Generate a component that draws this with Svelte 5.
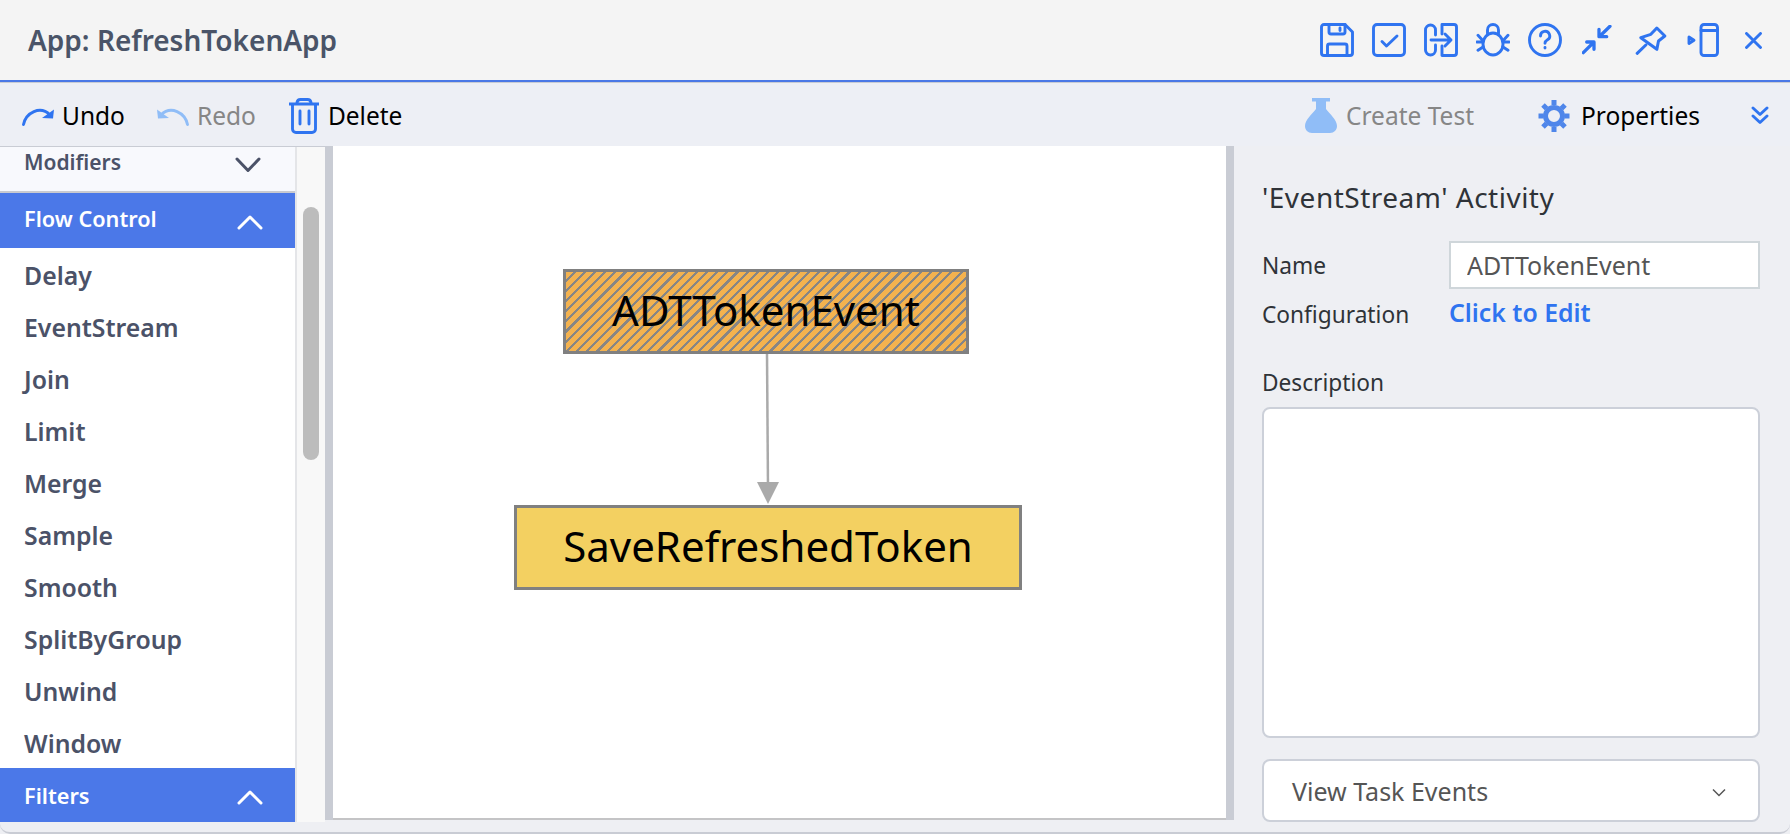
<script>
  const items = ['Delay', 'EventStream', 'Join', 'Limit', 'Merge', 'Sample', 'Smooth', 'SplitByGroup', 'Unwind', 'Window'];
</script>

<div class="app">
  <header class="header">
    <h1>App: RefreshTokenApp</h1>
    <div class="hicons">
      <svg class="ic" width="34" height="34" viewBox="0 0 34 34"><path d="M4 1.500H25L32.500 9V30a2.500 2.500 0 0 1-2.500 2.500H4A2.500 2.500 0 0 1 1.500 30V4A2.500 2.500 0 0 1 4 1.500Z"/><path d="M9 1.500V9a2 2 0 0 0 2 2H23a2 2 0 0 0 2-2V1.500M20 5V7.500"/><path d="M7.500 32.500V23a2 2 0 0 1 2-2H25a2 2 0 0 1 2 2V32.500"/></svg>
      <svg class="ic" width="34" height="34" viewBox="0 0 34 34"><rect x="1.500" y="1.500" width="31" height="31" rx="3.500"/><path d="M10 18.500l4.500 4.500L25 13"/></svg>
      <svg class="ic" width="34" height="34" viewBox="0 0 34 34"><path d="M11.500 12V7a5 5 0 0 0-10 0V27a5 5 0 0 0 10 0V22"/><path d="M18 11V1.500H30a2.500 2.500 0 0 1 2.500 2.500V30a2.500 2.500 0 0 1-2.500 2.500H18V23"/><path d="M7 17H27M21 11l6 6-6 6"/></svg>
      <svg class="ic" width="34" height="34" viewBox="0 0 34 34"><ellipse cx="17" cy="21" rx="10" ry="11"/><path d="M11.500 10.500V7a5.500 5.500 0 0 1 11 0V10.500M2 12.300L7 17.700M0.800 19H6.500M2 27.300L7 24M32 12.300L27 17.700M33.200 19H27.500M32 27.300L27 24"/></svg>
      <svg class="ic" width="34" height="34" viewBox="0 0 34 34"><circle cx="17" cy="17" r="15.500"/><path d="M12.500 13a4.600 4.600 0 1 1 7 3.800c-1.600 1-2.500 1.700-2.500 3.400M17 24.500V25"/></svg>
      <svg class="ic m2 bold" width="30" height="30" viewBox="0 0 30 30"><path d="M28 1.300L17.500 11.500M17 4.300V11.700H24.700M1.300 27.700L11.500 17.500M4.700 17H12V24.300"/></svg>
      <svg class="ic pin" width="32" height="29" viewBox="175 25 95 87"><path d="M240 31L264 55L245 70L240 95L192 60L222 50ZM207 82L181 107"/></svg>
      <svg class="ic m2" width="32" height="34" viewBox="0 0 32 34"><rect x="14" y="1.500" width="16.500" height="31" rx="3"/><path d="M14 7.500H30.500M2 14V20.500L7 17.200Z"/></svg>
      <svg class="ic close" width="17" height="17" viewBox="0 0 17 17"><path d="M1.500 1.500L15.500 15.500M15.500 1.500L1.500 15.500"/></svg>
    </div>
  </header>

  <div class="toolbar">
    <button class="tb undo">
      <svg class="ic" width="32" height="20" viewBox="0 0 32 20"><path d="M1.500 18.500C4 7 18 -1 28 9"/><path class="fill" d="M32 3.500L31 12.500L20 12Z"/></svg>
      Undo
    </button>
    <button class="tb redo off">
      <svg class="ic lite" width="32" height="20" viewBox="0 0 32 20"><path d="M30.500 18.500C28 7 14 -1 4 9"/><path class="fill" d="M0 3.500L1 12.500L12 12Z"/></svg>
      Redo
    </button>
    <button class="tb del">
      <svg class="ic" width="30" height="36" viewBox="0 0 30 36"><path d="M0.500 6H29.500M8 6V4.500A3.500 3.500 0 0 1 11.500 1.500H18.500A3.500 3.500 0 0 1 22 4.500V6M3.500 6V31a3.500 3.500 0 0 0 3.500 3.500H23a3.500 3.500 0 0 0 3.500-3.500V6"/><path d="M11 13V26M20 13V26"/></svg>
      Delete
    </button>
    <span class="grow"></span>
    <button class="tb test off">
      <svg width="32" height="35" viewBox="0 0 32 35"><path class="flask" d="M7 0H25V3.500H21V11C25 16 32 22 32 28C32 32 29 35 25 35H7C3 35 0 32 0 28C0 22 7 16 11 11V3.500H7Z"/></svg>
      Create Test
    </button>
    <button class="tb props">
      <svg width="32" height="34" viewBox="0 0 32 34"><g class="gear"><circle cx="16" cy="17" r="8.500"/><path d="M16 1V6M16 28V33M0.500 17H5.500M26.500 17H31.500M5 6L8.500 9.500M23.500 24.500L27 28M27 6L23.500 9.500M8.500 24.500L5 28"/></g></svg>
      Properties
    </button>
    <svg class="ic dbl" width="18" height="19" viewBox="0 0 18 19"><path d="M2 2L9 8.500L16 2M2 10L9 16.500L16 10"/></svg>
  </div>

  <div class="main">
    <aside class="side">
      <div class="list">
        <div class="sec mod">
          <span>Modifiers</span>
          <svg width="26" height="16" viewBox="0 0 26 16"><path d="M2 2L13 13.500L24 2"/></svg>
        </div>
        <div class="sec on">
          <span>Flow Control</span>
          <svg width="26" height="16" viewBox="0 0 26 16"><path d="M2 14L13 3L24 14"/></svg>
        </div>
        {#each items as it}
          <div class="item">{it}</div>
        {/each}
        <div class="sec on last">
          <span>Filters</span>
          <svg width="26" height="16" viewBox="0 0 26 16"><path d="M2 14L13 3L24 14"/></svg>
        </div>
      </div>
      <div class="track"><div class="thumb"></div></div>
    </aside>
    <div class="split"></div>
    <section class="canvas">
      <div class="node hatch">ADTTokenEvent</div>
      <svg class="edge" width="30" height="160" viewBox="0 0 30 160"><path d="M14 0L15 135"/><path class="head" d="M4 128H26L15 150Z"/></svg>
      <div class="node plain">SaveRefreshedToken</div>
    </section>
    <div class="split"></div>
    <aside class="panel">
      <h2>'EventStream' Activity</h2>
      <div class="frow name">
        <span class="lbl">Name</span>
        <input class="inp" value="ADTTokenEvent" />
      </div>
      <div class="frow conf">
        <span class="lbl">Configuration</span>
        <span class="link">Click to Edit</span>
      </div>
      <div class="lbl desc">Description</div>
      <div class="area"></div>
      <div class="select">
        <span>View Task Events</span>
        <svg width="14" height="9" viewBox="0 0 14 9"><path d="M1 1.500L7 7.500L13 1.500"/></svg>
      </div>
    </aside>
  </div>
  <div class="foot"></div>
</div>

<style>
  :global(body) { margin: 0; }
  .app {
    width: 1790px; height: 834px; overflow: hidden; display: flex; flex-direction: column;
    font-family: "Noto Sans", "Open Sans", sans-serif; background: #eeeff3;
  }
  svg { display: block; flex: none; }
  .ic { fill: none; stroke: #2f74f0; stroke-width: 2.900; stroke-linecap: round; stroke-linejoin: round; }
  .ic.lite { stroke: #90bdf7; }
  .ic .fill { fill: #2f74f0; stroke: none; }
  .ic.lite .fill { fill: #90bdf7; }
  .ic.pin { stroke-width: 9; }
  .ic.bold { stroke-width: 3.300; }
  .header {
    height: 80px; box-sizing: content-box; background: #f4f4f4; border-bottom: 2px solid #4a78e6;
    display: flex; align-items: center; padding: 0 28px; justify-content: space-between; flex: none;
  }
  h1 { margin: 0; font-size: 28px; font-weight: 600; color: #4a5468; }
  .hicons { display: flex; align-items: center; gap: 18px; margin-top: 0; }
  .m2 { margin-left: 2px; }
  .pin { margin-left: 5px; }
  .close { margin-left: 8px; }
  .toolbar {
    background: #edeff5; border-top: 1px solid #c9ccd4; flex: none;
    display: flex; align-items: center; padding: 2px 21px 0 22px; box-sizing: border-box; height: 64px; color: #000; font-size: 24.500px;
  }
  .tb {
    display: flex; align-items: center; gap: 8px; background: none; border: 0; padding: 0; margin: 0;
    font: inherit; color: #000;
  }
  .tb.off { color: #868686; }
  .redo { margin-left: 32px; gap: 8px; }
  .test { gap: 9px; }
  .del { margin-left: 33px; gap: 9px; }
  .grow { flex: 1; }
  .flask { fill: #90bdf7; }
  .gear { fill: none; stroke: #4f86ea; stroke-width: 5; }
  .props { margin-left: 64px; gap: 11px; }
  .dbl { margin-left: 51px; }
  .main { height: 676px; display: flex; background: #eeeff3; flex: none; }
  .side { width: 325px; flex: none; display: flex; background: #f8f8f8; border-top: 1px solid #c9ccd4; box-sizing: border-box; height: 676px; }
  .list { width: 297px; box-sizing: border-box; flex: none; background: #fff; border-right: 2px solid #e4e5e8; overflow: hidden; }
  .sec {
    display: flex; justify-content: space-between; padding: 0 32px 0 24px; font-size: 21.700px; font-weight: 600;
    height: 55px; align-items: center; box-sizing: border-box;
  }
  .sec span { position: relative; top: -2px; }
  .sec.last span { top: 0; }
  .sec svg { fill: none; stroke-width: 3; stroke-linecap: round; stroke-linejoin: round; position: relative; top: 1px; }
  .mod { height: 46px; background: #f8f9fd; color: #4b5268; border-bottom: 2px solid #c9cad0; align-items: flex-start; padding-top: 1px; padding-right: 34px; font-size: 21px; }
  .mod span { top: 0; }
  .mod svg { stroke: #4b5268; margin-top: 8px; }
  .on { background: #4b78e8; color: #fff; }
  .on svg { stroke: #fff; }
  .item { height: 52px; line-height: 55px; padding-left: 24px; font-size: 24.800px; font-weight: 600; color: #4b5268; }
  .track { flex: 1; position: relative; }
  .thumb { width: 16px; height: 253px; margin: 60px 0 0 6px; background: #bcbcbc; border-radius: 8px; }
  .split { width: 8px; height: 674px; background: #c9ccd4; flex: none; }
  .canvas { position: relative; width: 893px; height: 672px; background: #fff; border-bottom: 2px solid #c4c4c6; flex: none; }
  .node {
    position: absolute; box-sizing: border-box; display: flex; align-items: center; justify-content: center;
    border: 3px solid #808080; font-size: 42px; color: #000; padding-bottom: 4px;
  }
  .hatch {
    left: 230px; top: 123px; width: 406px; height: 85px;
    background: repeating-linear-gradient(135deg, #f3b24f 0 5px, #868686 5px 7.200px);
  }
  .plain { left: 181px; top: 359px; width: 508px; height: 85px; background: #f3d061; }
  .edge { position: absolute; left: 420px; top: 208px; fill: none; stroke: #aaa; stroke-width: 2.500; }
  .head { fill: #aaa; stroke: none; }
  .panel { flex: 1; min-width: 0; padding: 0 30px 0 28px; color: #2f3338; }
  h2 { margin: 0 0 2px; font-size: 28px; font-weight: 400; line-height: 34px; padding-top: 34px; color: #2f3338; letter-spacing: 0.5px; }
  .lbl { font-size: 22.700px; }
  .frow { display: flex; align-items: center; }
  .frow .lbl { width: 187px; flex: none; }
  .name { margin-top: 27px; }
  .inp {
    flex: 1; min-width: 0; height: 48px; box-sizing: border-box; border: 2px solid #cfd6da; background: #fff;
    padding: 0 16px; font: inherit; font-size: 25px; color: #555; outline: 0; border-radius: 0;
  }
  .conf { margin-top: 5px; height: 40px; }
  .link { color: #2f74f0; font-size: 24.800px; font-weight: 600; margin-top: -4px; }
  .desc { margin-top: 34px; line-height: 30px; }
  .area { height: 331px; box-sizing: border-box; margin-top: 9px; background: #fff; border: 2px solid #ccd0d9; border-radius: 8px; }
  .select {
    height: 63px; box-sizing: border-box; margin-top: 21px; background: #fff; border: 2px solid #ccd0d9; border-radius: 8px;
    display: flex; align-items: center; justify-content: space-between; padding: 0 32px 0 28px; font-size: 25px; color: #555;
  }
  .select svg { fill: none; stroke: #555; stroke-width: 1.500; margin-top: 4px; }
  .foot { flex: none; box-sizing: border-box; height: 12px; background: #eeeff3; border-bottom: 2px solid #c9ccd4; border-radius: 0 0 10px 10px; }
</style>
